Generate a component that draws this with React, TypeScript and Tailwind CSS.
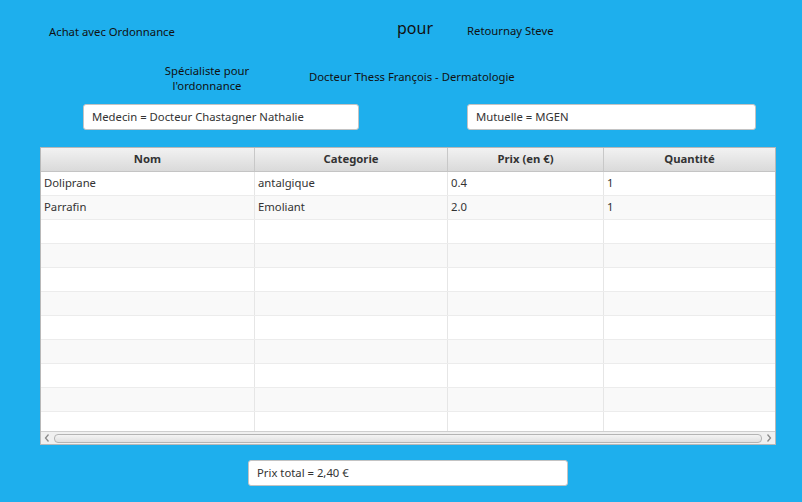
import React from 'react';

type Produit = { nom: string; categorie: string; prix: string; quantite: string };

const produits: Produit[] = [
  { nom: 'Doliprane', categorie: 'antalgique', prix: '0.4', quantite: '1' },
  { nom: 'Parrafin', categorie: 'Emoliant', prix: '2.0', quantite: '1' },
];

const colonnes = [
  { titre: 'Nom', w: 'w-[214px]' },
  { titre: 'Categorie', w: 'w-[193px]' },
  { titre: 'Prix (en €)', w: 'w-[156px]' },
  { titre: 'Quantité', w: 'flex-1' },
];

function Champ({ texte, className }: { texte: string; className: string }) {
  return (
    <div
      className={
        'h-[26px] bg-white border border-[#c3c3c3] rounded-[3px] flex items-center pl-[8px] text-[11.3px] text-[#333]' +
        ' ' +
        className
      }
    >
      {texte}
    </div>
  );
}

function Ligne({ p, index }: { p?: Produit; index: number }) {
  const cells = p ? [p.nom, p.categorie, p.prix, p.quantite] : ['', '', '', ''];
  return (
    <div
      className={
        'flex h-[24px] border-b border-[#ececec] ' + (index % 2 === 1 ? 'bg-[#f9f9f9]' : 'bg-white')
      }
    >
      {colonnes.map((c, i) => (
        <div
          key={i}
          className={c.w + ' h-full flex items-center pl-[3px] text-[11.3px] text-[#333] ' + (i < 3 ? 'border-r border-[#e6e6e6]' : '')}
        >
          {cells[i]}
        </div>
      ))}
    </div>
  );
}

export default function App() {
  const vides = Array.from({ length: 11 - produits.length });

  return (
    <div
      className="w-[802px] h-[502px] bg-[#1eafed] overflow-hidden text-[#111]"
      style={{ fontFamily: '"Noto Sans", "Open Sans", sans-serif' }}
    >
      {/* entête */}
      <div className="flex items-center h-[26px] mt-[18px]">
        <div className="ml-[49px] w-[348px] text-[11.3px] mt-[2px]">Achat avec Ordonnance</div>
        <div className="w-[70px] text-[16px] -mt-[6px]">pour</div>
        <div className="text-[11.3px]">Retournay Steve</div>
      </div>

      <div className="flex items-center mt-[17px] h-[32px]">
        <div className="ml-[150px] w-[114px] text-center text-[11.3px] leading-[15px] mt-[2px]">
          Spécialiste pour
          <br />
          l'ordonnance
        </div>
        <div className="ml-[45px] text-[11.3px]">Docteur Thess François - Dermatologie</div>
      </div>

      <div className="flex mt-[11px]">
        <Champ texte="Medecin = Docteur Chastagner Nathalie" className="ml-[83px] w-[276px]" />
        <Champ texte="Mutuelle = MGEN" className="ml-[108px] w-[289px]" />
      </div>

      {/* tableau */}
      <div className="ml-[40px] mt-[17px] w-[736px] h-[298px] bg-white border border-[#b8b8b8] flex flex-col">
        <div className="flex h-[24px] bg-gradient-to-b from-[#f2f2f2] to-[#dadada] border-b border-[#c4c4c4]">
          {colonnes.map((c, i) => (
            <div
              key={i}
              className={
                c.w +
                ' flex items-center justify-center text-[11.3px] font-bold text-[#333] ' +
                (i < 3 ? 'border-r border-[#c8c8c8]' : '')
              }
            >
              {c.titre}
            </div>
          ))}
        </div>
        <div className="flex-1 overflow-hidden">
          {produits.map((p, i) => (
            <Ligne key={i} p={p} index={i} />
          ))}
          {vides.map((_, i) => (
            <Ligne key={'v' + i} index={i + produits.length} />
          ))}
        </div>
        <div className="h-[13px] bg-[#f0f0f0] border-t border-[#cfcfcf] flex items-center px-[2px] gap-[3px]">
          <svg width="8" height="10" viewBox="0 0 8 10" className="shrink-0">
            <path d="M5.5 1.5 L2.5 5 L5.5 8.5" fill="none" stroke="#8a8a8a" strokeWidth="1.3" />
          </svg>
          <div className="flex-1 h-[9px] rounded-[4px] border border-[#b4b4b4] bg-gradient-to-b from-[#f4f4f4] to-[#e0e0e0]" />
          <svg width="8" height="10" viewBox="0 0 8 10" className="shrink-0">
            <path d="M2.5 1.5 L5.5 5 L2.5 8.5" fill="none" stroke="#8a8a8a" strokeWidth="1.3" />
          </svg>
        </div>
      </div>

      <div className="flex mt-[15px]">
        <Champ texte="Prix total = 2,40 €" className="ml-[248px] w-[320px]" />
      </div>
    </div>
  );
}
